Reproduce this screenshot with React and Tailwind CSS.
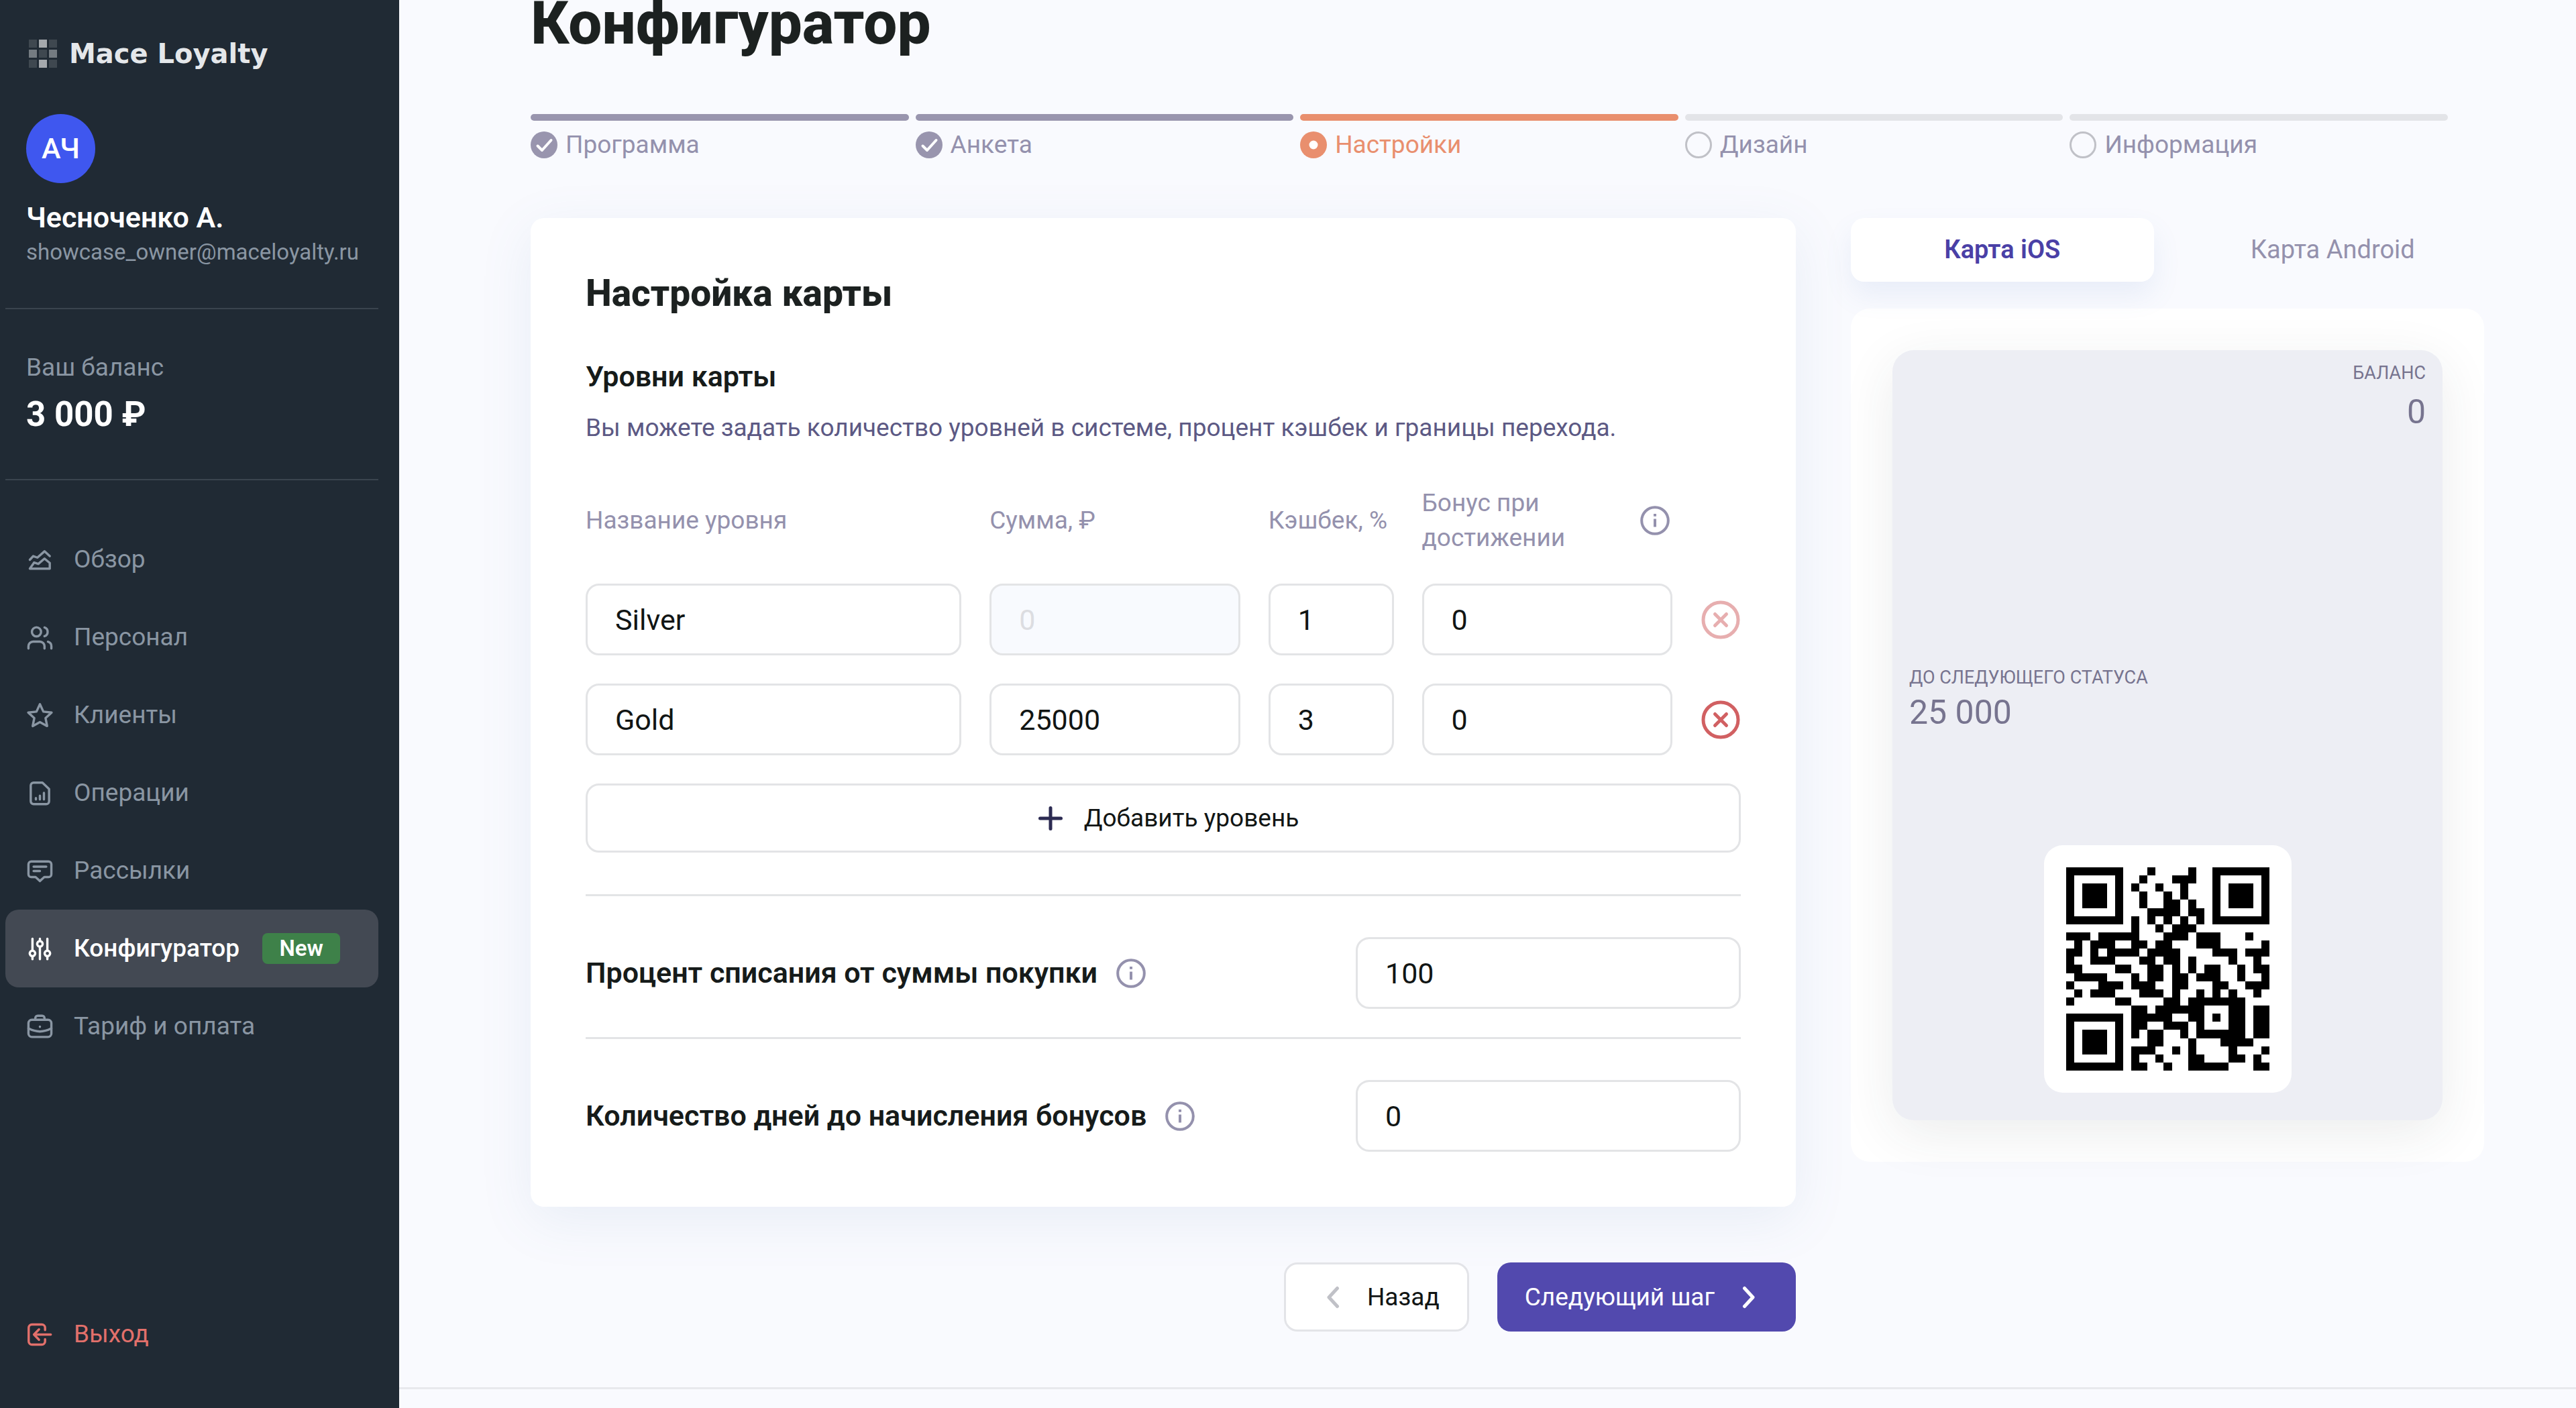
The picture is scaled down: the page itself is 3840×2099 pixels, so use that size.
import React, { useState } from 'react'

const stroke = {
  viewBox: '0 0 24 24',
  fill: 'none',
  stroke: 'currentColor',
  strokeWidth: 2,
  strokeLinecap: 'round',
  strokeLinejoin: 'round',
}

const icons = {
  overview: (
    <>
      <path d="M3.2 12 6.2 8.8l3.6 1.3L16 4.6l4.6 4.2" />
      <path d="M3.2 19.8 7 14.4l3.6 1.2 5.4-4.6 4.6 3.8v5Z" />
    </>
  ),
  staff: (
    <>
      <circle cx="9" cy="7" r="4" />
      <path d="M2 21.5v-2a4 4 0 0 1 4-4h6a4 4 0 0 1 4 4v2" />
      <path d="M16 3.2a4 4 0 0 1 0 7.6" />
      <path d="M22 21.5v-2a4 4 0 0 0-3-3.9" />
    </>
  ),
  clients: <path d="m12 2.2 3 6.5 7.2.8-5.3 4.8 1.4 7-6.3-3.5-6.3 3.5 1.4-7L1.8 9.5 9 8.7Z" />,
  operations: (
    <>
      <path d="M6.5 2.8h7.7L20 8.3V19a2.5 2.5 0 0 1-2.5 2.5h-11A2.5 2.5 0 0 1 4 19V5.3a2.5 2.5 0 0 1 2.5-2.5Z" />
      <path d="M8.5 16.2v1.2M12 14.2v3.2M15.5 11.7v5.7" />
    </>
  ),
  mailings: (
    <>
      <path d="M4.5 3.7h15A2.5 2.5 0 0 1 22 6.2v8.600a2.5 2.5 0 0 1-2.5 2.5h-3.7L12 20.7l-3.8-3.4H4.5A2.5 2.5 0 0 1 2 14.8V6.2a2.5 2.5 0 0 1 2.5-2.5Z" />
      <path d="M6.5 8.2h11M6.5 12h5.5" />
    </>
  ),
  configurator: (
    <>
      <path d="M5.5 3.2v10.300M5.5 18.5V21M12 3.2v2M12 10.2V21M18.5 3.2v10.300M18.5 18.5V21" />
      <circle cx="5.5" cy="16" r="2.4" />
      <circle cx="12" cy="7.7" r="2.4" />
      <circle cx="18.5" cy="16" r="2.4" />
    </>
  ),
  billing: (
    <>
      <rect x="2" y="6" width="20" height="15" rx="3" />
      <path d="M8 6V4.5A2 2 0 0 1 10 2.5h4a2 2 0 0 1 2 2V6" />
      <path d="M2 13.5c6.5 3.5 13.5 3.5 20 0M12 12v.1" />
    </>
  ),
  logout: (
    <>
      <path d="M16.5 8V6a2.8 2.8 0 0 0-2.8-2.8H5A2.8 2.8 0 0 0 2.2 6v12A2.8 2.8 0 0 0 5 20.8h8.7a2.8 2.8 0 0 0 2.8-2.8v-2" />
      <path d="M21.5 12H7M11.2 7.5 6.8 12l4.4 4.5" />
    </>
  ),
}

const navItems = [
  { id: 'overview', title: 'Обзор' },
  { id: 'staff', title: 'Персонал' },
  { id: 'clients', title: 'Клиенты' },
  { id: 'operations', title: 'Операции' },
  { id: 'mailings', title: 'Рассылки' },
  { id: 'configurator', title: 'Конфигуратор', badge: 'New' },
  { id: 'billing', title: 'Тариф и оплата' },
]

const steps = [
  { title: 'Программа', state: 'done' },
  { title: 'Анкета', state: 'done' },
  { title: 'Настройки', state: 'current' },
  { title: 'Дизайн', state: 'next' },
  { title: 'Информация', state: 'next' },
]

const stepBar = {
  done: 'bg-[#9995ae]',
  current: 'bg-[#e98f6e]',
  next: 'bg-[#e3e4e8]',
}

const qrRows = [
  '1111111000100001001111111',
  '1000001001000111001000001',
  '1011101010010010001011101',
  '1011101001001010001011101',
  '1011101001001101001011101',
  '1000001000111101101000001',
  '1111111010101010101111111',
  '0000000010010111000000000',
  '1110111110001110111000100',
  '0101110011011000111000001',
  '1101011110111100001110111',
  '1001110001101101000010010',
  '1100001100110101011001011',
  '0111100010110110111001001',
  '1000111011100110001100111',
  '0101110001110100101010010',
  '1000001100001101111111000',
  '0000000011011111100011011',
  '1111111011111001101011011',
  '1000001011001110100011011',
  '1011101010110010111111011',
  '1011101000110001000111100',
  '1011101011100101000010001',
  '1000001010010001100011010',
  '1111111011001001111100011',
]

const fieldClass =
  'w-full min-w-0 h-[107px] px-[41px] border-3 border-[#e3e4e6] rounded-[20px] bg-white text-[43px] text-[#111514] outline-none focus:border-[#5249ae] disabled:bg-[#f8fafe] disabled:text-[#dcdde1]'

function NavIcon({ id }) {
  return <svg {...stroke} className="size-[41px] shrink-0">{icons[id]}</svg>
}

function InfoIcon() {
  return (
    <svg viewBox="0 0 24 24" fill="none" stroke="currentColor" strokeWidth="2.2" className="size-[44px] shrink-0 text-[#9491ad]">
      <circle cx="12" cy="12" r="10.8" />
      <path d="M12 10.6v6.6M12 6.6v2" />
    </svg>
  )
}

function StepIcon({ state }) {
  if (state === 'done') {
    return (
      <svg viewBox="0 0 40 40" fill="none" className="size-[40px] shrink-0">
        <circle cx="20" cy="20" r="20" fill="#9995ae" />
        <path d="m10.5 21.5 6.5 6.5L30.5 13" stroke="#fff" strokeWidth="4" strokeLinecap="round" strokeLinejoin="round" />
      </svg>
    )
  }
  if (state === 'current') {
    return (
      <svg viewBox="0 0 40 40" className="size-[40px] shrink-0">
        <circle cx="20" cy="20" r="20" fill="#e98f6e" />
        <circle cx="20" cy="20" r="6.5" fill="#fff" />
      </svg>
    )
  }
  return (
    <svg viewBox="0 0 40 40" fill="none" className="size-[40px] shrink-0">
      <circle cx="20" cy="20" r="18.5" stroke="#c0c1c7" strokeWidth="3" />
    </svg>
  )
}

function Sidebar() {
  return (
    <aside className="sticky top-0 flex flex-col h-screen w-[595px] shrink-0 pl-2 pr-[31px] pb-[52px] bg-[#202a34] text-[#8a96a3]">
      {/* Logo */}
      <div className="flex items-center gap-[18px] h-[60px] mt-[50px] px-[35px]">
        <svg viewBox="0 0 42 42" className="size-[42px] shrink-0" fill="#fff">
          <path opacity=".14" d="M0 0h12v12H0zM30 0h12v12H30zM15 15h12v12H15zM0 30h12v12H0zM30 30h12v12H30z" />
          <path opacity=".6" d="M15 0h12v12H15zM15 30h12v12H15z" />
          <path opacity=".38" d="M0 15h12v12H0zM30 15h12v12H30z" />
        </svg>
        <span className="font-['DejaVu_Sans',sans-serif] text-[40px] leading-[60px] font-bold text-[#e4e7ea] whitespace-nowrap">
          Mace Loyalty
        </span>
      </div>

      {/* Profile */}
      <div className="mt-[60px] px-[31px] pb-[61px] border-b-2 border-[#3a444e]">
        <div className="flex items-center justify-center size-[103px] rounded-full bg-[#3f57ef] text-[43px] font-medium text-white">АЧ</div>
        <div className="mt-[26px] text-[43px] leading-[50px] font-semibold text-white">Чесноченко А.</div>
        <div className="mt-[5px] text-[33px] leading-[44px]">showcase_owner@maceloyalty.ru</div>
      </div>

      {/* Balance */}
      <div className="pt-[62px] px-[31px] pb-[66px] border-b-2 border-[#3a444e]">
        <div className="text-[37px] leading-[50px]">Ваш баланс</div>
        <div className="mt-[15px] text-[51px] leading-[60px] font-bold text-white">3 000 ₽</div>
      </div>

      <nav className="mt-[60px]">
        {navItems.map((item) => (
          <a
            key={item.id}
            href={`#${item.id}`}
            className={`flex items-center h-[116px] px-[31px] rounded-[20px] text-[37px] ${
              item.badge ? 'bg-[#434953] text-white font-medium' : 'hover:text-white'
            }`}
          >
            <NavIcon id={item.id} />
            <span className="ml-[30px]">{item.title}</span>
            {item.badge && (
              <span className="flex items-center justify-center ml-[34px] w-[116px] h-[46px] rounded-lg bg-[#3e8149] text-[33px] font-semibold text-white">
                {item.badge}
              </span>
            )}
          </a>
        ))}
      </nav>

      <button type="button" className="flex items-center gap-[30px] h-[116px] mt-auto px-[31px] text-[37px] text-[#e2706b]">
        <NavIcon id="logout" />
        Выход
      </button>
    </aside>
  )
}

function Steps() {
  return (
    <ol className="flex gap-[10px] mt-[100px] pr-[54px]">
      {steps.map((step) => (
        <li key={step.title} className="flex-1">
          <div className={`h-[10px] rounded-full ${stepBar[step.state]}`} />
          <div
            className={`flex items-center gap-3 h-[40px] mt-4 text-[37px] leading-[40px] ${
              step.state === 'current' ? 'text-[#e98f6e]' : 'text-[#9491ad]'
            }`}
          >
            <StepIcon state={step.state} />
            {step.title}
          </div>
        </li>
      ))}
    </ol>
  )
}

function LevelRow({ level, index, onChange, onRemove }) {
  const first = index === 0
  return (
    <>
      <input aria-label="Название уровня" className={fieldClass} value={level.name} onChange={(e) => onChange('name', e.target.value)} />
      <input aria-label="Сумма, ₽" className={fieldClass} value={level.sum} disabled={first} onChange={(e) => onChange('sum', e.target.value)} />
      <input aria-label="Кэшбек, %" className={fieldClass} value={level.cashback} onChange={(e) => onChange('cashback', e.target.value)} />
      <input aria-label="Бонус при достижении" className={fieldClass} value={level.bonus} onChange={(e) => onChange('bonus', e.target.value)} />
      <button type="button" aria-label="Удалить уровень" disabled={first} onClick={onRemove} className="justify-self-center text-[#d16062] disabled:opacity-50">
        <svg viewBox="0 0 58 58" fill="none" stroke="currentColor" strokeWidth="5" strokeLinecap="round" className="size-[58px]">
          <circle cx="29" cy="29" r="26" />
          <path d="m20.5 20.5 17 17M37.5 20.5l-17 17" />
        </svg>
      </button>
    </>
  )
}

function SettingRow({ id, title, value, onChange }) {
  return (
    <div className="flex items-center justify-between pt-[61px] border-t-3 border-[#e3e4e6]">
      <div className="flex items-center gap-[28px]">
        <label htmlFor={id} className="text-[43px] font-semibold text-[#161b1a]">{title}</label>
        <InfoIcon />
      </div>
      <div className="w-1/3">
        <input id={id} className={fieldClass} value={value} onChange={(e) => onChange(e.target.value)} />
      </div>
    </div>
  )
}

function QrCode() {
  return (
    <svg viewBox="0 0 25 25" shapeRendering="crispEdges" className="size-[303px]">
      {qrRows.map((row, y) =>
        row.split('').map((cell, x) => (cell === '1' ? <rect key={`${x}-${y}`} x={x} y={y} width="1" height="1" /> : null))
      )}
    </svg>
  )
}

function CardPreview() {
  const [platform, setPlatform] = useState('ios')
  const tabs = [
    { id: 'ios', title: 'Карта iOS' },
    { id: 'android', title: 'Карта Android' },
  ]

  return (
    <section className="w-[944px] shrink-0">
      <div role="tablist" className="flex gap-[41px]">
        {tabs.map((tab) => (
          <button
            key={tab.id}
            type="button"
            role="tab"
            aria-selected={platform === tab.id}
            onClick={() => setPlatform(tab.id)}
            className={`flex-1 h-[95px] rounded-[20px] text-[38px] ${
              platform === tab.id
                ? 'bg-white font-semibold text-[#4a40a6] shadow-[0_20px_40px_rgba(90,130,200,0.1)]'
                : 'text-[#9491ad]'
            }`}
          >
            {tab.title}
          </button>
        ))}
      </div>

      <div className="mt-10 p-[62px] rounded-[28px] bg-white">
        <div className="flex flex-col h-[1148px] px-[25px] pt-[14px] pb-[41px] rounded-[32px] bg-[#edeef4] text-[#77748f] shadow-[0_20px_80px_rgba(40,60,50,0.09)]">
          <div className="text-right">
            <div className="text-[27px] leading-[40px]">БАЛАНС</div>
            <div className="mt-[8px] text-[50px] leading-[60px]">0</div>
          </div>
          <div className="mt-[346px]">
            <div className="text-[27px] leading-[40px]">ДО СЛЕДУЮЩЕГО СТАТУСА</div>
            <div className="mt-[2px] text-[50px] leading-[60px]">25 000</div>
          </div>
          <div className="flex items-center justify-center self-center size-[369px] mt-auto rounded-[28px] bg-white">
            <QrCode />
          </div>
        </div>
      </div>
    </section>
  )
}

export default function App() {
  const [levels, setLevels] = useState([
    { name: 'Silver', sum: '0', cashback: '1', bonus: '0' },
    { name: 'Gold', sum: '25000', cashback: '3', bonus: '0' },
  ])
  const [percent, setPercent] = useState('100')
  const [days, setDays] = useState('0')

  const updateLevel = (index, key, value) => {
    setLevels(levels.map((level, i) => (i === index ? { ...level, [key]: value } : level)))
  }

  const addLevel = () => {
    setLevels([...levels, { name: '', sum: '', cashback: '', bonus: '0' }])
  }

  const removeLevel = (index) => {
    setLevels(levels.filter((_, i) => i !== index))
  }

  return (
    <div className="flex min-h-screen bg-[#f9fafe] font-[Roboto,sans-serif] text-[#161b1a]">
      <Sidebar />

      <main className="flex-1 min-w-0">
        <div className="pl-[196px] pr-[137px]">
          <h1 className="text-[89px] leading-[70px] font-extrabold text-[#1c2120]">Конфигуратор</h1>
          <Steps />

          <div className="flex items-start gap-[82px] mt-[89px]">
            <div className="flex-1 min-w-0">
              {/* Card settings */}
              <section className="p-[82px] rounded-[20px] bg-white shadow-[0_20px_80px_rgba(90,130,180,0.1)]">
                <h2 className="text-[55px] leading-[60px] font-extrabold text-[#1c2120]">Настройка карты</h2>
                <h3 className="mt-[69px] text-[43px] leading-[50px] font-semibold">Уровни карты</h3>
                <p className="mt-[27px] text-[37px] leading-[50px] text-[#5c5984]">
                  Вы можете задать количество уровней в системе, процент кэшбек и границы перехода.
                </p>

                <div className="grid grid-cols-[3fr_2fr_1fr_2fr_60px] items-center gap-[42px] mt-[61px]">
                  <div className="text-[37px] leading-[52px] text-[#9491ad]">Название уровня</div>
                  <div className="text-[37px] leading-[52px] text-[#9491ad]">Сумма, ₽</div>
                  <div className="text-[37px] leading-[52px] text-[#9491ad] whitespace-nowrap">Кэшбек, %</div>
                  <div className="flex items-center justify-between pr-1 text-[37px] leading-[52px] text-[#9491ad]">
                    <span>Бонус при<br />достижении</span>
                    <InfoIcon />
                  </div>
                  <span />
                  {levels.map((level, index) => (
                    <LevelRow
                      key={index}
                      level={level}
                      index={index}
                      onChange={(key, value) => updateLevel(index, key, value)}
                      onRemove={() => removeLevel(index)}
                    />
                  ))}
                </div>

                <button
                  type="button"
                  onClick={addLevel}
                  className="flex items-center justify-center gap-8 w-full h-[103px] mt-[42px] pl-4 border-3 border-[#e3e4e6] rounded-[20px] text-[37px] text-[#111514]"
                >
                  <svg viewBox="0 0 36 36" fill="none" stroke="#2c2b52" strokeWidth="5" strokeLinecap="round" className="size-[36px]">
                    <path d="M18 2.5v31M2.5 18h31" />
                  </svg>
                  Добавить уровень
                </button>

                <div className="flex flex-col gap-[42px] mt-[62px]">
                  <SettingRow id="percent" title="Процент списания от суммы покупки" value={percent} onChange={setPercent} />
                  <SettingRow id="days" title="Количество дней до начисления бонусов" value={days} onChange={setDays} />
                </div>
              </section>

              <div className="flex justify-end gap-[42px] mt-[83px]">
                <button type="button" className="flex items-center gap-[41px] h-[103px] pl-[60px] pr-[41px] border-3 border-[#e3e4e8] rounded-[20px] bg-white text-[37px] text-[#111514]">
                  <svg viewBox="0 0 20 34" fill="none" stroke="#c0c1c7" strokeWidth="5" strokeLinecap="round" strokeLinejoin="round" className="w-[20px] h-[34px]">
                    <path d="M16.5 3.5 4 17l12.5 13.5" />
                  </svg>
                  Назад
                </button>
                <button type="button" className="flex items-center gap-[41px] h-[103px] pl-[41px] pr-[60px] rounded-[20px] bg-[#5249ae] text-[37px] text-white">
                  Следующий шаг
                  <svg viewBox="0 0 20 34" fill="none" stroke="currentColor" strokeWidth="5" strokeLinecap="round" strokeLinejoin="round" className="w-[20px] h-[34px]">
                    <path d="M3.5 3.5 16 17 3.5 30.5" />
                  </svg>
                </button>
              </div>
            </div>

            <CardPreview />
          </div>
        </div>

        <footer className="mt-[83px] border-t-3 border-[#e8e9ed]" />
      </main>
    </div>
  )
}
